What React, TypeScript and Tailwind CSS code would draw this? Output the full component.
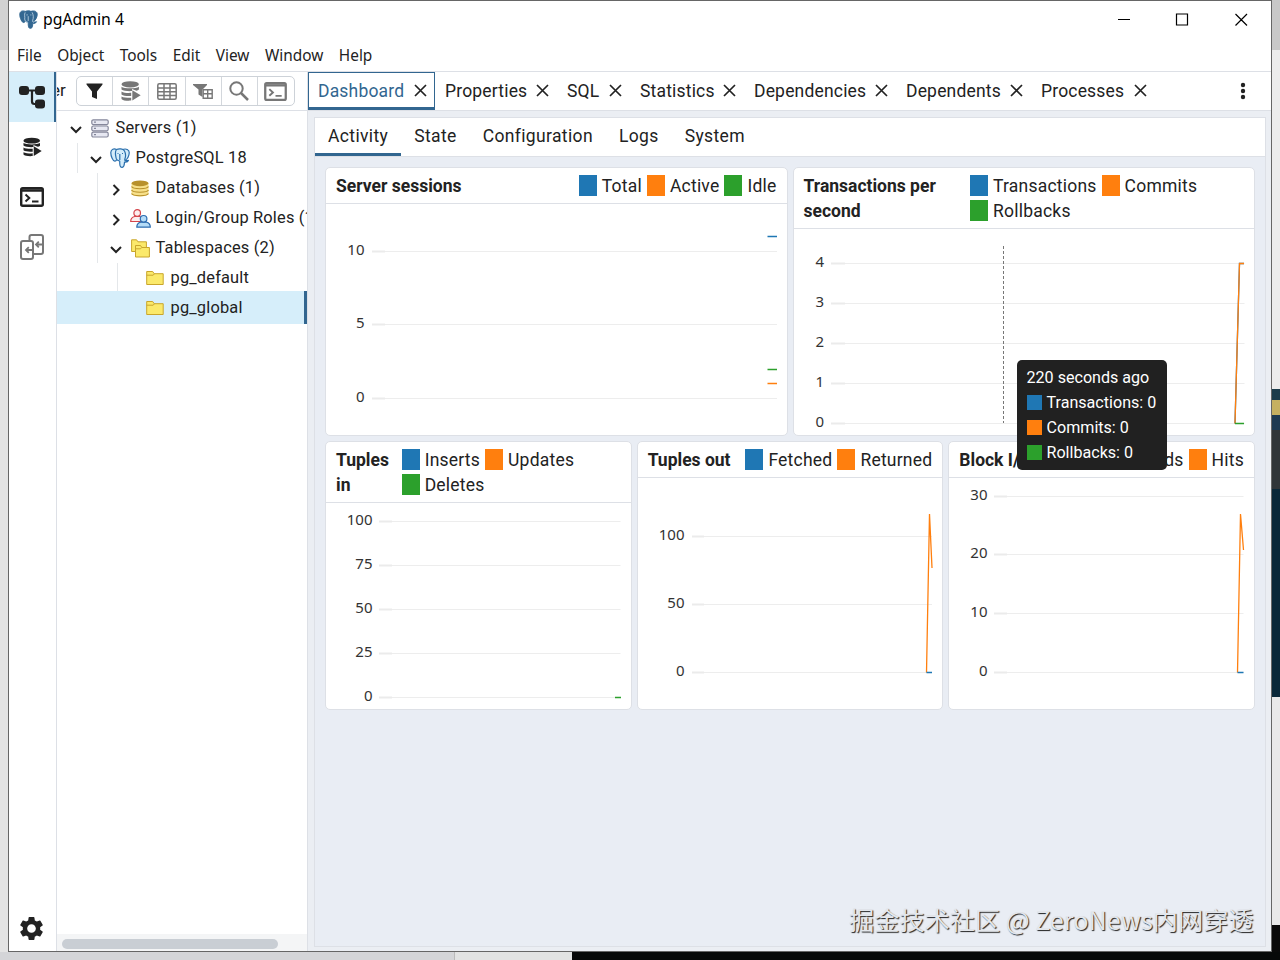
import React from "react";
import { MdSettings } from "react-icons/md";

const BLUE = "#1f77b4";
const ORANGE = "#ff7f0e";
const GREEN = "#2ca02c";

interface LegendItem {
  label: string;
  color: string;
}

interface Tick {
  value: string;
  y: number;
}

interface Series {
  color: string;
  points: string;
}

interface ChartCardProps {
  title: string;
  titleClass?: string;
  legendClass?: string;
  legend: LegendItem[];
  ticks: Tick[];
  labelX: number;
  tickX: number;
  gridX: number;
  endX: number;
  series: Series[];
  cursorX?: number;
}

function ChartCard({
  title,
  titleClass = "",
  legendClass = "",
  legend,
  ticks,
  labelX,
  tickX,
  gridX,
  endX,
  series,
  cursorX,
}: ChartCardProps) {
  return (
    <div className="flex h-[269px] min-w-0 flex-col overflow-hidden rounded-[5px] border border-[#dde0e6] bg-white">
      <div className="flex justify-between border-b border-[#dde0e6] px-[10px] py-[5px] text-[17.5px] leading-[25px]">
        <div className={`pt-px text-[17.5px] font-bold leading-[25px] ${titleClass}`}>
          <div className="-mb-px">{title}</div>
        </div>
        <div className={`flex flex-wrap gap-x-[5px] ${legendClass}`}>
          {legend.map((item) => (
            <div key={item.label} className="flex h-[25px] items-center gap-[5px] whitespace-nowrap">
              <span className="h-[21px] w-[18px]" style={{ backgroundColor: item.color }} />
              <span className="pt-[2px] tracking-[0.22px]">{item.label}</span>
            </div>
          ))}
        </div>
      </div>
      <svg className="w-full flex-1" fill="none">
        {ticks.map((tick) => (
          <g key={tick.value}>
            <path d={`M${gridX} ${tick.y}H${endX}`} stroke="#ededed" />
            <path d={`M${tickX} ${tick.y}H${gridX}`} stroke="#ebebeb" strokeWidth="2" />
            <text
              x={labelX - 0.5}
              y={tick.y + 3}
              textAnchor="end"
              fill="#333"
              className="font-['Noto_Sans'] text-[15px]"
            >
              {tick.value}
            </text>
          </g>
        ))}
        {cursorX && (
          <path d={`M${cursorX} 17V194`} stroke="#777" strokeDasharray="3 2" />
        )}
        {series.map((s, i) => (
          <polyline key={i} points={s.points} stroke={s.color} strokeWidth="1.300" />
        ))}
      </svg>
    </div>
  );
}

function ElephantLogo() {
  return (
    <svg viewBox="0 0 20 20" className="size-[19px]" strokeLinejoin="round">
      <g fill="#336791" stroke="#336791">
        <path d="M6.500 1.500C4 .3 1 1 .8 4.500.7 8 3 13.500 5 13.200c1 0 1.800-1.600 1.800-1.600z" />
        <path d="M12.500 1.500C16 .2 19.500 1.500 19.200 5c-.2 3-2.200 6.200-4 7.300z" />
        <path d="M6.500 1.500C9 .4 13 .6 14.500 3c1.300 2.500 1.200 6 .3 8.300-.6 1.300.7 1.700 3.700 1-.5 1.500-2.600 2-4 1.800-.3 2.300.2 4.700-2.300 5.200-2.300.2-2.500-2-2.500-6.300-2-.3-3.500-1.300-3.700-3.500C5.600 7 4.500 4 6.500 1.500z" />
      </g>
      <path
        d="M6.500 2.500C5.200 5 6.500 7 6 9.500c.1 1.800 1.300 3 3.400 3.500M13.800 2.500c1.500 2.500 1.600 6 .6 8.300-.5 1.300.2 2 1.400 2M7.800 5.200h1.400M12 5.200h1M9.700 6.500v5"
        fill="none"
        stroke="#cfe0ee"
        strokeWidth=".8"
      />
    </svg>
  );
}

function DatabasePlay({ className }: { className: string }) {
  return (
    <svg viewBox="0 0 20 20" className={className} fill="currentColor">
      <ellipse cx="9.200" cy="3.300" rx="8.700" ry="3.100" />
      <path d="M.5 5.800c2.600 2 14.800 2 17.400 0V8.600c-.6.500-1.400.9-2.400 1.100L11 7.900v2.200c-4.300.2-9-.2-10.500-1.600z" />
      <path d="M.5 10.400c2 1.400 6.500 1.700 9.700 1.400v3.100c-3.300.3-7.700.1-9.700-1.400z" />
      <path d="M.5 15.400c2 1.200 6.500 1.400 9.700 1.300v2.900c-4 .3-8.700-.1-9.700-1.700z" />
      <path d="M11.300 9.200l8.400 5-8.400 5.200z" />
    </svg>
  );
}

function TerminalIcon({ className }: { className: string }) {
  return (
    <svg viewBox="0 0 24 20" className={className} fill="none" stroke="currentColor">
      <rect x="1.200" y="1.200" width="21.600" height="17.600" rx="1.500" strokeWidth="2.400" />
      <path d="M1 3.500h22" strokeWidth="2.500" />
      <path d="M5.500 7.500l3.800 3.500-3.800 3.500M12 14.600h6.500" strokeWidth="2" />
    </svg>
  );
}

function TreeIcon() {
  return (
    <svg viewBox="0 0 26 24" className="ml-[2px] h-[24px] w-[26px]" fill="#222">
      <rect x="0" y="1" width="10" height="9" rx="3" />
      <rect x="16" y="1" width="10" height="9" rx="3" />
      <rect x="16" y="14.500" width="10" height="9" rx="3" />
      <path d="M9 5.500h8M13 5.500v11a2.500 2.500 0 0 0 2.500 2.500H18" fill="none" stroke="#222" strokeWidth="2.200" />
    </svg>
  );
}

function CompareIcon() {
  return (
    <svg viewBox="0 0 24 26" className="h-[26px] w-[24px]" fill="none" stroke="#777" strokeWidth="2">
      <path d="M9.500 6V3a2 2 0 0 1 2-2H21a2 2 0 0 1 2 2v15a2 2 0 0 1-2 2h-7" />
      <rect x="1" y="7" width="12" height="18" rx="2" />
      <path d="M22 10.500h-6m2.800-2.800L16 10.500l2.800 2.800M12 16H6m2.800-2.800L6 16l2.800 2.800" strokeWidth="1.800" />
    </svg>
  );
}

function CloseIcon({ className = "" }: { className?: string }) {
  return (
    <svg viewBox="0 0 13 13" className={`size-[13px] ${className}`} stroke="#222" strokeWidth="1.700">
      <path d="M1 1l11 11M12 1L1 12" />
    </svg>
  );
}

function Folder({ className = "" }: { className?: string }) {
  return (
    <svg viewBox="0 0 18 16" className={className} fill="#fbe96a" stroke="#c9a52c">
      <path d="M.7 14.500V1.500h6l1.500 2.200h9v10.800z" />
      <path d="M.7 5.200h6.500l1.300-1.500" fill="none" />
    </svg>
  );
}

const treeIcons: Record<string, React.ReactNode> = {
  servers: (
    <svg viewBox="0 0 18 19" className="h-[19px] w-[18px]" fill="#e7e8f2" stroke="#85879b" strokeWidth="1.200">
      <rect x=".8" y=".8" width="16.400" height="4.800" rx="1.500" />
      <rect x=".8" y="7" width="16.400" height="4.800" rx="1.500" />
      <rect x=".8" y="13.200" width="16.400" height="4.800" rx="1.500" />
      <path d="M3 3.200h2M3 9.400h2M3 15.600h2" />
    </svg>
  ),
  postgres: (
    <svg viewBox="0 0 20 20" className="h-[20px] w-[20px]" fill="#d3ecfa" stroke="#2a6fad" strokeWidth="1.200" strokeLinejoin="round">
      <path d="M6.500 1.500C4 .3 1 1 .8 4.500.7 8 3 13.500 5 13.200c1 0 1.800-1.600 1.800-1.600" />
      <path d="M12.500 1.500C16 .2 19.500 1.500 19.200 5c-.2 3-2.200 6.200-4 7.300" />
      <path d="M6.500 1.500C9 .4 13 .6 14.500 3c1.300 2.500 1.200 6 .3 8.300-.6 1.300.7 1.700 3.700 1-.5 1.500-2.600 2-4 1.800-.3 2.300.2 4.700-2.300 5.200-2.300.2-2.500-2-2.500-6.300-2-.3-3.500-1.300-3.700-3.500C5.600 7 4.500 4 6.500 1.500z" />
      <path d="M7.500 5.500h1M12 5.500h1M9.800 6v6" fill="none" />
    </svg>
  ),
  databases: (
    <svg viewBox="0 0 18 17" className="h-[17px] w-[18px]">
      <path d="M.5 3v10.500c0 4 17 4 17 0V3z" fill="#f7e08a" />
      <ellipse cx="9" cy="3.300" rx="8.500" ry="2.900" fill="#b8912c" />
      <path d="M.5 6.500c1 3 16 3 17 0M.5 10c1 3 16 3 17 0M.5 13.500c1 3 16 3 17 0" fill="none" stroke="#b8912c" strokeWidth="1.200" />
    </svg>
  ),
  roles: (
    <svg viewBox="0 0 21 19" className="h-[19px] w-[21px] shrink-0" strokeWidth="1.200">
      <g fill="#fdeeee" stroke="#d5454b">
        <path d="M.7 12.500c0-3.500 2-4.500 4-5h5c2 .5 4 1.500 4 5z" />
        <circle cx="7.200" cy="4" r="3.300" />
      </g>
      <g fill="#b5dcf7" stroke="#2c6cb0">
        <path d="M6.800 18.200c0-3.500 2-4.500 4-5h5.500c2 .5 4 1.500 4 5z" />
        <circle cx="13.600" cy="9.800" r="3.300" />
      </g>
    </svg>
  ),
  tablespaces: (
    <svg viewBox="0 0 19 19" className="h-[19px] w-[19px]" fill="#fbe96a" stroke="#c9a52c">
      <path d="M.6 12.500V.8h5l1.300 2h8.500v9.700z" />
      <path d="M4.500 18V6.500h5l1.300 2h7.600V18z" />
      <path d="M4.500 9.800h5l1.300-1.300" fill="none" />
    </svg>
  ),
  folder: <Folder className="h-[16px] w-[18px]" />,
};

interface TreeRow {
  label: string;
  icon: string;
  indent: string;
  open?: boolean;
  leaf?: boolean;
  selected?: boolean;
}

const rows: TreeRow[] = [
  { label: "Servers (1)", icon: "servers", indent: "w-px", open: true },
  { label: "PostgreSQL 18", icon: "postgres", indent: "w-[21px] border-r", open: true },
  { label: "Databases (1)", icon: "databases", indent: "w-[41px] border-r" },
  { label: "Login/Group Roles (17)", icon: "roles", indent: "w-[41px] border-r" },
  { label: "Tablespaces (2)", icon: "tablespaces", indent: "w-[41px] border-r", open: true },
  { label: "pg_default", icon: "folder", indent: "w-[61px] border-r", leaf: true },
  { label: "pg_global", icon: "folder", indent: "w-[61px]", leaf: true, selected: true },
];

function ObjectTree() {
  return (
    <div className="flex flex-1 flex-col overflow-hidden pt-[2px]">
      {rows.map((row) => (
        <div
          key={row.label}
          className={`flex shrink-0 items-center whitespace-nowrap text-[16.4px] tracking-[0.18px] ${
            row.selected
              ? "-mt-[2px] h-[33px] border-r-[3px] border-[#326690] bg-[#d6eefa] pt-px"
              : "h-[30px]"
          }`}
        >
          <span className={`h-full shrink-0 border-[#e4e7ea] ${row.indent}`} />
          {row.leaf ? (
            <span className="w-[28px] shrink-0" />
          ) : (
            <span className="flex shrink-0 pl-[12px]">
              <svg viewBox="0 0 12 12" className="mr-[8px] mt-[3px] size-[12px]" fill="none" stroke="#222" strokeWidth="2">
                <path d={row.open ? "M1 3l5 5 5-5" : "M3.500 1l5 5-5 5"} />
              </svg>
            </span>
          )}
          <span className={`flex shrink-0 justify-center ${row.leaf ? "w-[18px]" : "w-[20px]"}`}>
            {treeIcons[row.icon]}
          </span>
          <span className={row.leaf ? "pl-[6.5px]" : "pl-[5.5px]"}>{row.label}</span>
        </div>
      ))}
    </div>
  );
}

function Toolbar() {
  const cell = "flex w-[36.300px] items-center justify-center border-r border-[#d3d7dc] last:border-r-0";
  return (
    <div className="flex h-[39px] items-center overflow-hidden border-b border-[#dde0e6] text-[17px]">
      <span className="w-[19px] shrink-0 overflow-hidden">
        <span className="-ml-[6px]">er</span>
      </span>
      <div className="flex h-[30px] w-[219px] shrink-0 rounded-[5px] border border-[#cdd2d8] text-[#777]">
        <div className={cell}>
          <svg viewBox="0 0 17 17" className="size-[17px]" fill="#222">
            <path d="M.5.500h16v1L11 8.500v7.500l-5-2V8.500L.5 1.500z" />
          </svg>
        </div>
        <div className={cell}>
          <DatabasePlay className="h-[20px] w-[20px]" />
        </div>
        <div className={cell}>
          <svg viewBox="0 0 20 17" className="h-[17px] w-[20px]" fill="none" stroke="currentColor" strokeWidth="1.500">
            <rect x=".8" y=".8" width="18.400" height="15.400" rx="1.500" />
            <path d="M1 5h18M1 8.800h18M1 12.500h18M7 1v15M13 1v15" />
          </svg>
        </div>
        <div className={cell}>
          <svg viewBox="0 0 20 17" className="h-[17px] w-[20px]" fill="currentColor">
            <path d="M0 1h14v1L9.500 6.500V14l-4-2.500v-5L0 2z" />
            <path d="M10.200 6.700h9v8.600h-9zM10 10.800h9.500M14.700 6.700v8.600" fill="white" stroke="currentColor" strokeWidth="1.400" />
          </svg>
        </div>
        <div className={cell}>
          <svg viewBox="0 0 20 20" className="size-[20px]" fill="none" stroke="currentColor">
            <circle cx="7.500" cy="7.500" r="6.200" strokeWidth="2" />
            <path d="M12 12l7 7" strokeWidth="2.500" />
          </svg>
        </div>
        <div className={cell}>
          <TerminalIcon className="h-[19px] w-[23px]" />
        </div>
      </div>
    </div>
  );
}

const tabs = [
  { name: "Dashboard", width: "w-[127px]" },
  { name: "Properties", width: "w-[122px]" },
  { name: "SQL", width: "w-[73px]" },
  { name: "Statistics", width: "w-[114px]" },
  { name: "Dependencies", width: "w-[152px]" },
  { name: "Dependents", width: "w-[135px]" },
  { name: "Processes", width: "w-[124px]" },
];

const subTabs = ["Activity", "State", "Configuration", "Logs", "System"];

const menu = ["File", "Object", "Tools", "Edit", "View", "Window", "Help"];

function Tooltip() {
  const lines = [
    { text: "Transactions: 0", color: BLUE },
    { text: "Commits: 0", color: ORANGE },
    { text: "Rollbacks: 0", color: GREEN },
  ];
  return (
    <div className="absolute left-[1017px] top-[360px] h-[110px] w-[150px] rounded-[5px] bg-[#212121] px-[9.5px] py-[5px] text-[16.1px] leading-[25px] text-white">
      <div className="whitespace-nowrap">220 seconds ago</div>
      {lines.map((line) => (
        <div key={line.text} className="flex items-center gap-[5px] whitespace-nowrap">
          <span className="size-[15px]" style={{ backgroundColor: line.color }} />
          {line.text}
        </div>
      ))}
    </div>
  );
}

export default function App() {
  return (
    <div className="relative flex h-[960px] w-[1280px] flex-col overflow-hidden bg-[#ececec] font-[Roboto,sans-serif] text-[#222]">
      <div className="flex h-[952px]">
        {/* desktop behind the window, left edge */}
        <div className="flex w-[8px] flex-col">
          <div className="h-[50px] bg-[#d2d2d2]" />
          <div className="flex-1 bg-[#e4e4e4]" />
        </div>

        <div className="flex w-[1264px] flex-col border border-[#666] bg-white">
          <div className="flex h-[36px] items-center pl-[10px] font-['Noto_Sans',sans-serif] text-[15.800px] text-black">
            <ElephantLogo />
            <span className="ml-[5px] flex-1 pt-[2px]">pgAdmin 4</span>
            <svg viewBox="0 0 131 13" className="mr-[23px] h-[13px] w-[131px]" fill="none" stroke="#000" strokeWidth="1.200">
              <path d="M1 6.500h12M59.500 1h11v11h-11zM118.500 1l11.500 11.500M130 1l-11.500 11.500" />
            </svg>
          </div>
          <div className="flex h-[35px] items-center gap-[15.500px] border-b border-[#dde0e6] pl-[8px] pt-[3px] font-['Noto_Sans',sans-serif] text-[15.400px]">
            {menu.map((item) => (
              <span key={item}>{item}</span>
            ))}
          </div>

          <div className="flex min-h-0 flex-1">
            <div className="flex w-[48px] flex-col items-center border-r border-[#dde0e6] pr-px">
              <div className="flex h-[50px] w-[47px] shrink-0 items-center justify-center border-r-[2px] border-[#326690] bg-[#d6eefa]">
                <TreeIcon />
              </div>
              <div className="flex h-[50px] items-center">
                <DatabasePlay className="h-[20px] w-[19px]" />
              </div>
              <div className="flex h-[50px] items-center">
                <TerminalIcon className="h-[20px] w-[24px]" />
              </div>
              <div className="flex h-[50px] items-center">
                <CompareIcon />
              </div>
              <MdSettings className="mb-[8px] mr-px mt-auto size-[29px]" />
            </div>

            <div className="flex w-[250px] flex-col overflow-hidden">
              <Toolbar />
              <ObjectTree />
              <div className="flex h-[17px] items-center bg-[#f4f5f6] pl-[5px] pt-[2px]">
                <div className="h-[10px] w-[216px] rounded-full bg-[#c9ced4]" />
              </div>
            </div>

            <div className="flex min-w-0 flex-1 flex-col border-l border-[#dde0e6] bg-[#ebeef3]">
              <div className="flex h-[39px] shrink-0 items-start border-b border-[#dde0e6] bg-white text-[17.500px] tracking-[0.180px]">
                {tabs.map((tab, i) => (
                  <div
                    key={tab.name}
                    className={`flex items-center justify-between ${tab.width} ${
                      i === 0
                        ? "h-[38px] border border-b-[3px] border-[#326690] pl-[9px] pr-[7px] pt-[2px] text-[#326690]"
                        : "h-[37px] pl-[10px] pr-[8px]"
                    }`}
                  >
                    <span className={i === 0 ? "" : "pt-[2px]"}>{tab.name}</span>
                    <CloseIcon className={i === 0 ? "-mt-[2px]" : ""} />
                  </div>
                ))}
                <svg viewBox="0 0 6 18" className="ml-auto mr-[25px] mt-[10px] h-[18px] w-[6px]" fill="#222">
                  <circle cx="3" cy="3" r="2.200" />
                  <circle cx="3" cy="9" r="2.200" />
                  <circle cx="3" cy="15" r="2.200" />
                </svg>
              </div>

              <div className="mb-[4px] ml-[6px] mr-[5px] mt-[6px] flex-1 border border-[#dde0e6] bg-[#e9edf4]">
                <div className="flex h-[39px] border-b border-[#dde0e6] bg-white text-[17.500px] tracking-[0.360px]">
                  {subTabs.map((name, i) => (
                    <div
                      key={name}
                      className={`flex h-[38px] items-center px-[13px] ${
                        i === 0 ? "border-b-[3px] border-[#326690] pt-px" : "pb-[2px]"
                      }`}
                    >
                      {name}
                    </div>
                  ))}
                </div>

                <div className="flex flex-col gap-[5px] p-[10px]">
                  <div className="grid grid-cols-2 gap-[5px]">
                    <ChartCard
                      title="Server sessions"
                      legend={[
                        { label: "Total", color: BLUE },
                        { label: "Active", color: ORANGE },
                        { label: "Idle", color: GREEN },
                      ]}
                      ticks={[
                        { value: "10", y: 47.5 },
                        { value: "5", y: 120.5 },
                        { value: "0", y: 194.5 },
                      ]}
                      labelX={39}
                      tickX={46}
                      gridX={59}
                      endX={451}
                      series={[
                        { color: BLUE, points: "441.500,32.500 451,32.500" },
                        { color: GREEN, points: "441.500,165.500 451,165.500" },
                        { color: ORANGE, points: "441.500,179.500 451,179.500" },
                      ]}
                    />
                    <ChartCard
                      title="Transactions per second"
                      titleClass="w-[145px]"
                      legendClass="w-[274px]"
                      legend={[
                        { label: "Transactions", color: BLUE },
                        { label: "Commits", color: ORANGE },
                        { label: "Rollbacks", color: GREEN },
                      ]}
                      ticks={[
                        { value: "4", y: 34.5 },
                        { value: "3", y: 74.5 },
                        { value: "2", y: 114.5 },
                        { value: "1", y: 154.5 },
                        { value: "0", y: 194.5 },
                      ]}
                      labelX={30.5}
                      tickX={37}
                      gridX={51}
                      endX={450.5}
                      cursorX={209.5}
                      series={[
                        { color: BLUE, points: "441,194.500 445.500,34.500 450,34.500" },
                        { color: ORANGE, points: "441,194.500 445.500,34.500 450,34.500" },
                        { color: GREEN, points: "441,194.500 450,194.500" },
                      ]}
                    />
                  </div>
                  <div className="grid grid-cols-3 gap-[5px]">
                    <ChartCard
                      title="Tuples in"
                      titleClass="w-[56px]"
                      legendClass="w-[219px]"
                      legend={[
                        { label: "Inserts", color: BLUE },
                        { label: "Updates", color: ORANGE },
                        { label: "Deletes", color: GREEN },
                      ]}
                      ticks={[
                        { value: "100", y: 18.5 },
                        { value: "75", y: 62.5 },
                        { value: "50", y: 106.5 },
                        { value: "25", y: 150.5 },
                        { value: "0", y: 194.5 },
                      ]}
                      labelX={47}
                      tickX={53}
                      gridX={66}
                      endX={294.5}
                      series={[{ color: GREEN, points: "289,194.500 295,194.500" }]}
                    />
                    <ChartCard
                      title="Tuples out"
                      legend={[
                        { label: "Fetched", color: BLUE },
                        { label: "Returned", color: ORANGE },
                      ]}
                      ticks={[
                        { value: "100", y: 58.5 },
                        { value: "50", y: 126.5 },
                        { value: "0", y: 194.5 },
                      ]}
                      labelX={47}
                      tickX={54}
                      gridX={66}
                      endX={294}
                      series={[
                        { color: ORANGE, points: "288.500,194.500 291.500,36 294,90" },
                        { color: BLUE, points: "288.500,194.500 294,194.500" },
                      ]}
                    />
                    <ChartCard
                      title="Block I/O"
                      legend={[
                        { label: "Reads", color: BLUE },
                        { label: "Hits", color: ORANGE },
                      ]}
                      ticks={[
                        { value: "30", y: 18.5 },
                        { value: "20", y: 76.5 },
                        { value: "10", y: 135.5 },
                        { value: "0", y: 194.5 },
                      ]}
                      labelX={39}
                      tickX={45}
                      gridX={58}
                      endX={294.5}
                      series={[
                        { color: ORANGE, points: "288.500,194.500 291.500,36 294.500,72" },
                        { color: BLUE, points: "288.500,194.500 294.500,194.500" },
                      ]}
                    />
                  </div>
                </div>
              </div>
            </div>
          </div>
        </div>

        {/* desktop behind the window, right edge */}
        <div className="flex w-[8px] flex-col">
          <div className="h-[50px] bg-[#c8c8c8]" />
          <div className="h-[339px] bg-[#ececec]" />
          <div className="h-[11px] bg-[#1c3c4b]" />
          <div className="h-[15px] bg-[#c5b061]" />
          <div className="h-[15px] bg-[#1d3a52]" />
          <div className="h-[59px] bg-[#303538]" />
          <div className="h-[208px] bg-[#0a2839]" />
          <div className="h-[228px] bg-[#e9e9e9]" />
          <div className="flex-1 bg-[#0a0a0a]" />
        </div>
      </div>
      <div className="flex flex-1">
        <div className="w-[455px] border-r border-[#bbb] bg-[#d4d5d8]" />
        <div className="w-[117px] bg-[#e2e3e3]" />
        <div className="flex-1 bg-[#070909]" />
      </div>

      <Tooltip />
      <div className="absolute left-[849px] top-[901px] whitespace-nowrap font-['Noto_Sans_CJK_SC',sans-serif] text-[25.200px] leading-[36px] text-[#e3e6eb] [text-shadow:1px_1px_1px_#222]">
        掘金技术社区 @ ZeroNews内网穿透
      </div>
    </div>
  );
}
